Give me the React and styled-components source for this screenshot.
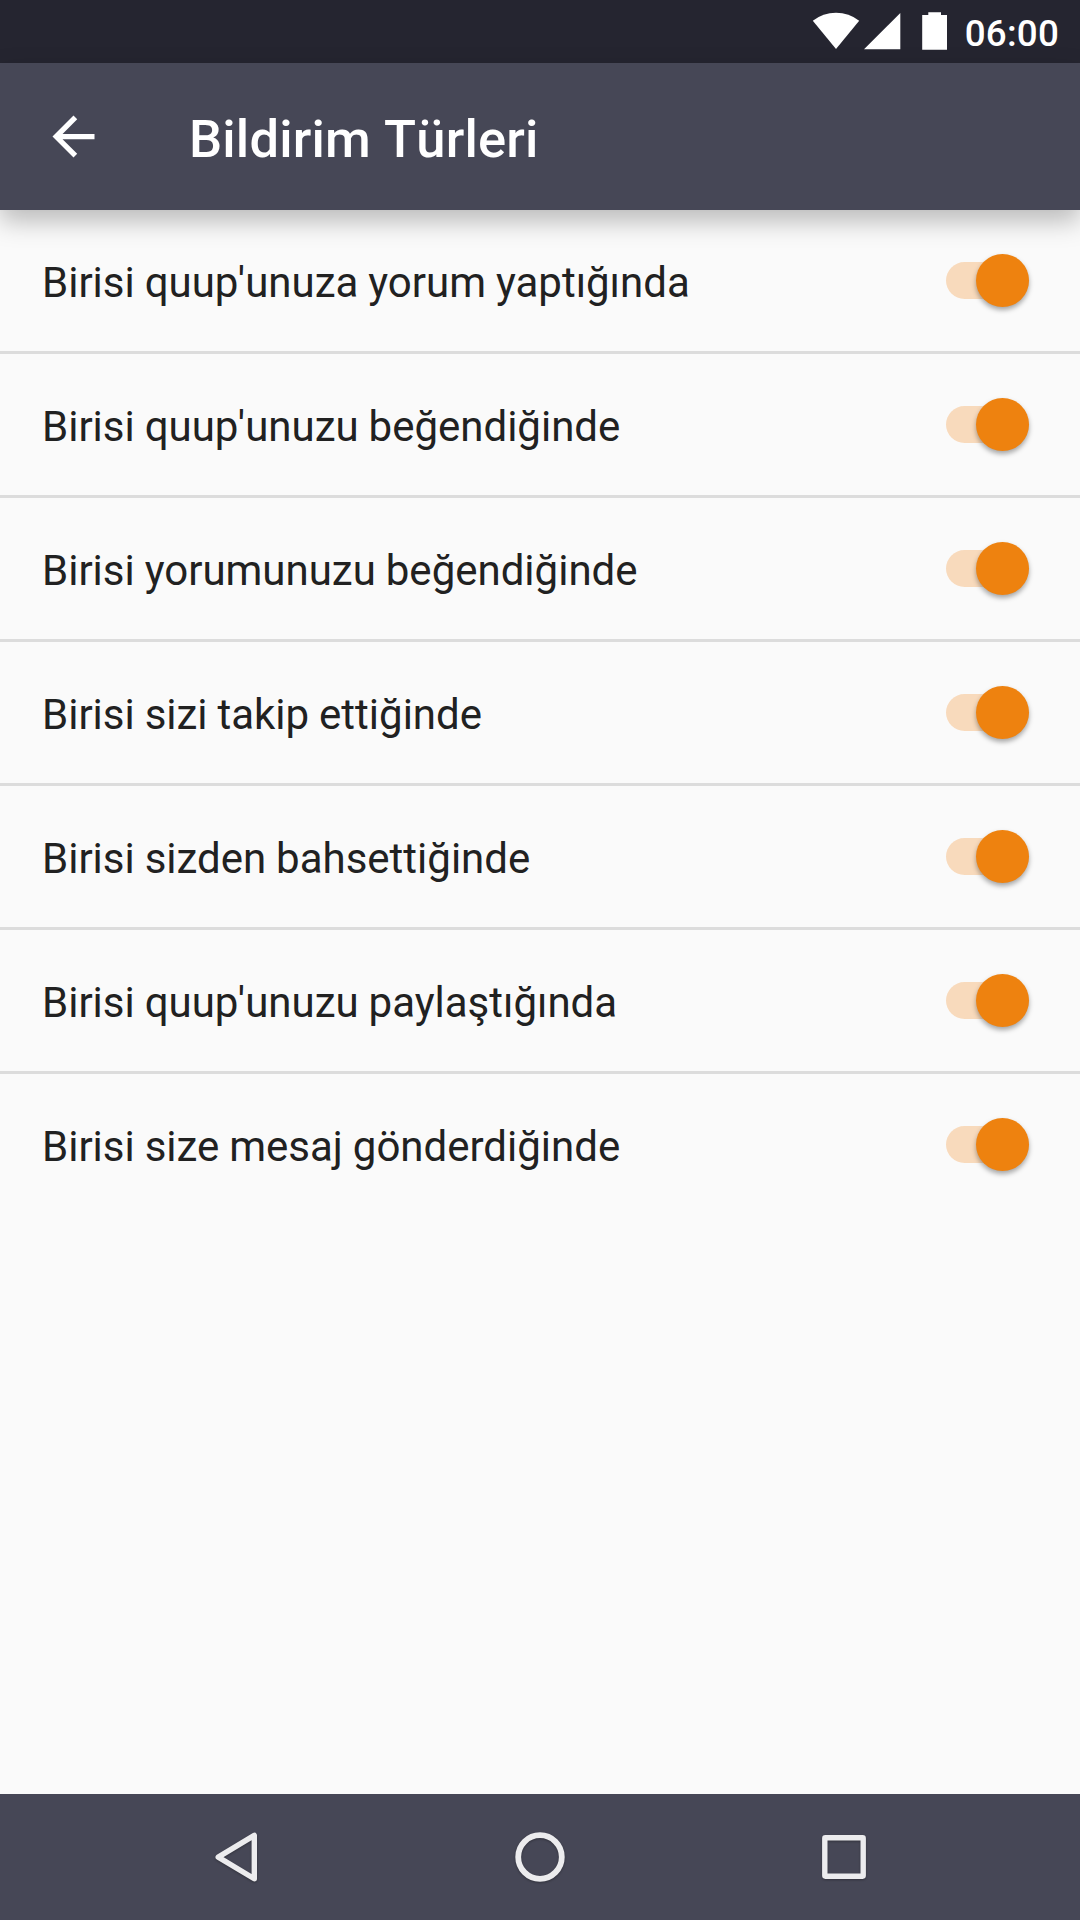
import React, { useState } from "react";
import styled, { createGlobalStyle } from "styled-components";

const GlobalStyle = createGlobalStyle`
  * { box-sizing: border-box; }
  body {
    margin: 0;
    background: #fafafa;
    font-family: Roboto, "Noto Sans", sans-serif;
  }
`;

const Screen = styled.div`
  display: flex;
  flex-direction: column;
  width: 1080px;
  height: 1920px;
  overflow: hidden;
  background: #fafafa;
`;

const StatusBar = styled.header`
  display: flex;
  align-items: center;
  justify-content: flex-end;
  height: 63px;
  padding-right: 21px;
  background: #252530;
  flex: none;
`;

const StatusIcons = styled.svg`
  display: block;
  width: 140px;
  height: 63px;
  margin-right: 15px;
  fill: #fff;
`;

const Clock = styled.time`
  padding-top: 4px;
  color: #fff;
  font-size: 36.75px;
  font-weight: 500;
  line-height: 43px;
  letter-spacing: 0.2px;
`;

const Toolbar = styled.div`
  position: relative;
  z-index: 1;
  display: flex;
  align-items: center;
  height: 147px;
  padding-left: 42px;
  gap: 84px;
  background: #464756;
  box-shadow: 0 11px 24px rgba(0, 0, 0, 0.26);
  flex: none;
`;

const BackButton = styled.button`
  display: flex;
  padding: 0;
  border: 0;
  background: none;
  cursor: pointer;

  svg {
    width: 63px;
    height: 63px;
    fill: #fff;
  }
`;

const Title = styled.h1`
  margin: 0;
  padding-top: 5px;
  color: #fff;
  font-size: 52.5px;
  font-weight: 500;
  line-height: 62px;
  font-kerning: none;
  letter-spacing: 0.17px;
`;

const List = styled.ul`
  flex: 1;
  margin: 0;
  padding: 0;
  list-style: none;
`;

const Row = styled.li`
  display: flex;
  align-items: center;
  justify-content: space-between;
  height: 144px;
  padding: 0 51px 0 42px;
  border-bottom: 3px solid #dcdcdc;

  &:last-child {
    border-bottom-color: transparent;
  }
`;

const Label = styled.span`
  padding-top: 5px;
  color: #212121;
  font-size: 42px;
  line-height: 50px;
  word-spacing: -0.5px;
`;

const Track = styled.button`
  display: flex;
  align-items: center;
  justify-content: ${(p) => (p.$on ? "flex-end" : "flex-start")};
  width: 83px;
  height: 37px;
  padding: 0;
  border: 0;
  border-radius: 19px;
  background: ${(p) => (p.$on ? "#f8dabc" : "#c7c7c7")};
  cursor: pointer;
`;

const Thumb = styled.span`
  flex: none;
  width: 53px;
  height: 53px;
  border-radius: 50%;
  background: ${(p) => (p.$on ? "#ee820f" : "#f1f1f1")};
  box-shadow: 0 3px 5px rgba(0, 0, 0, 0.34);
`;

const NavBar = styled.nav`
  display: flex;
  justify-content: center;
  height: 126px;
  background: #464756;
  flex: none;
`;

const NavButton = styled.button`
  display: flex;
  align-items: center;
  justify-content: center;
  width: 304px;
  padding: 0;
  border: 0;
  background: none;
  cursor: pointer;

  svg {
    width: 60px;
    height: 60px;
    fill: none;
    stroke: #ececee;
    stroke-linejoin: round;
    filter: drop-shadow(0 1px 1px rgba(0, 0, 0, 0.3));
  }
`;

const OPTIONS = [
  "Birisi quup'unuza yorum yaptığında",
  "Birisi quup'unuzu beğendiğinde",
  "Birisi yorumunuzu beğendiğinde",
  "Birisi sizi takip ettiğinde",
  "Birisi sizden bahsettiğinde",
  "Birisi quup'unuzu paylaştığında",
  "Birisi size mesaj gönderdiğinde",
];

function Switch({ label }) {
  const [on, setOn] = useState(true);
  return (
    <Track type="button" role="switch" aria-checked={on} aria-label={label} $on={on} onClick={() => setOn(!on)}>
      <Thumb $on={on} />
    </Track>
  );
}

export default function App() {
  return (
    <Screen lang="tr">
      <GlobalStyle />
      <StatusBar>
        <StatusIcons viewBox="810 0 140 63">
          <path d="M836 49 L812.8 20.7 Q823 12.7 836 12.7 Q849 12.7 859.2 20.7 Z" />
          <path d="M900.3 13 V49.3 H864 Z" />
          <path d="M922.2 15 H928.3 V12.3 H941 V15 H947 V49.8 H922.2 Z" />
        </StatusIcons>
        <Clock>06:00</Clock>
      </StatusBar>
      <Toolbar>
        <BackButton type="button">
          <svg viewBox="0 0 24 24">
            <path d="M20 11H7.83l5.59-5.59L12 4l-8 8 8 8 1.41-1.41L7.83 13H20v-2z" />
          </svg>
        </BackButton>
        <Title>Bildirim Türleri</Title>
      </Toolbar>
      <List>
        {OPTIONS.map((text) => (
          <Row key={text}>
            <Label>{text}</Label>
            <Switch label={text} />
          </Row>
        ))}
      </List>
      <NavBar>
        <NavButton type="button">
          <svg viewBox="0 0 60 60" strokeWidth="5.4">
            <path d="M48.3 8.4 V51.8 L12.2 30.1 Z" />
          </svg>
        </NavButton>
        <NavButton type="button">
          <svg viewBox="0 0 60 60" strokeWidth="5.8">
            <circle cx="30" cy="30" r="21.8" />
          </svg>
        </NavButton>
        <NavButton type="button">
          <svg viewBox="0 0 60 60" strokeWidth="5.4">
            <rect x="10.8" y="10.8" width="38.4" height="38.4" rx="0.6" />
          </svg>
        </NavButton>
      </NavBar>
    </Screen>
  );
}
